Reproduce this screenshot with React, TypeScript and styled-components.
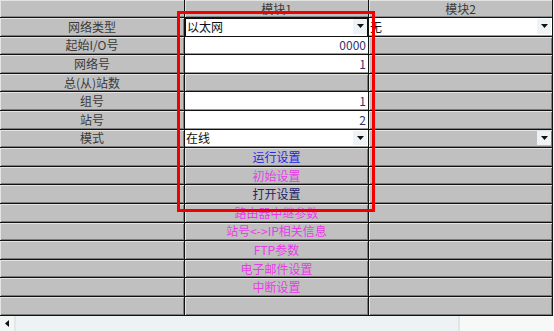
import React from "react";
import styled, { createGlobalStyle } from "styled-components";

const GlobalStyle = createGlobalStyle`
    html, body {
        margin: 0;
        padding: 0;
        background: #f4f6f6;
        font-family: "Noto Sans CJK SC", "Liberation Sans", sans-serif;
    }
`

type Cell =
    | { kind: 'gray'; arrow?: boolean }
    | { kind: 'input'; value: string }
    | { kind: 'select'; value: string; focus?: boolean }
    | { kind: 'action'; text: string; color: string }

type Row = { label: string; mod1: Cell; mod2: Cell }

const BLUE = '#2626e6'
const PINK = '#e83ce8'
const NAVY = '#22226e'

const rows: Row[] = [
    { label: '网络类型', mod1: { kind: 'select', value: '以太网', focus: true }, mod2: { kind: 'select', value: '无' } },
    { label: '起始I/O号', mod1: { kind: 'input', value: '0000' }, mod2: { kind: 'gray' } },
    { label: '网络号', mod1: { kind: 'input', value: '1' }, mod2: { kind: 'gray' } },
    { label: '总(从)站数', mod1: { kind: 'gray' }, mod2: { kind: 'gray' } },
    { label: '组号', mod1: { kind: 'input', value: '1' }, mod2: { kind: 'gray' } },
    { label: '站号', mod1: { kind: 'input', value: '2' }, mod2: { kind: 'gray' } },
    { label: '模式', mod1: { kind: 'select', value: '在线' }, mod2: { kind: 'gray', arrow: true } },
    { label: '', mod1: { kind: 'action', text: '运行设置', color: BLUE }, mod2: { kind: 'gray' } },
    { label: '', mod1: { kind: 'action', text: '初始设置', color: PINK }, mod2: { kind: 'gray' } },
    { label: '', mod1: { kind: 'action', text: '打开设置', color: NAVY }, mod2: { kind: 'gray' } },
    { label: '', mod1: { kind: 'action', text: '路由器中继参数', color: PINK }, mod2: { kind: 'gray' } },
    { label: '', mod1: { kind: 'action', text: '站号<->IP相关信息', color: PINK }, mod2: { kind: 'gray' } },
    { label: '', mod1: { kind: 'action', text: 'FTP参数', color: PINK }, mod2: { kind: 'gray' } },
    { label: '', mod1: { kind: 'action', text: '电子邮件设置', color: PINK }, mod2: { kind: 'gray' } },
    { label: '', mod1: { kind: 'action', text: '中断设置', color: PINK }, mod2: { kind: 'gray' } },
    { label: '', mod1: { kind: 'gray' }, mod2: { kind: 'gray' } },
]

function DropArrow() {
    return (
        <ArrowBox>
            <svg width="7" height="4" viewBox="0 0 7 4"><path d="M0 0h7L3.5 4z" fill="#111" /></svg>
        </ArrowBox>
    )
}

function renderCell(cell: Cell) {
    switch (cell.kind) {
        case 'input':
            return <InputCell>{cell.value}</InputCell>
        case 'select':
            return (
                <SelectCell focus={cell.focus}>
                    <span>{cell.value}</span>
                    <DropArrow />
                </SelectCell>
            )
        case 'action':
            return <ActionCell color={cell.color}>{cell.text}</ActionCell>
        default:
            return <GrayCell>{cell.arrow && <DropArrow />}</GrayCell>
    }
}

export default function App() {
    return (
        <>
            <GlobalStyle />
            <Page>
                <Sheet>
                    <HeadCell />
                    <HeadCell>模块1</HeadCell>
                    <HeadCell>模块2</HeadCell>
                    {rows.map((row, i) => (
                        <React.Fragment key={i}>
                            <LabelCell>{row.label}</LabelCell>
                            {renderCell(row.mod1)}
                            {renderCell(row.mod2)}
                        </React.Fragment>
                    ))}
                </Sheet>
                <ScrollBar>
                    <ScrollBtn>
                        <svg width="4" height="7" viewBox="0 0 4 7"><path d="M4 0v7L0 3.5z" fill="#111" /></svg>
                    </ScrollBtn>
                    <Thumb />
                    <Track />
                </ScrollBar>
                <Highlight />
            </Page>
        </>
    )
}

const Page = styled.div`
    position: relative;
    width: 554px;
    height: 331px;
    overflow: hidden;
    background: #f4f6f6;
`

const Sheet = styled.div`
    display: grid;
    grid-template-columns: 184px 183px 183px;
    grid-template-rows: 17px;
    grid-auto-rows: 17.6px;
    gap: 1px;
    width: 552px;
    background: #111;
    border-right: 1px solid #111;
    border-bottom: 1px solid #111;
    font-size: 12px;
    line-height: 1;
`

const BaseCell = styled.div`
    display: flex;
    align-items: center;
    min-width: 0;
    overflow: hidden;
    white-space: nowrap;
    box-sizing: border-box;
`

const GrayCell = styled(BaseCell)`
    justify-content: flex-end;
    background: #c0c0c0;
    box-shadow: inset 1px 1px 0 #e4e4e4, inset -1px -1px 0 #7c7c7c;
`

const HeadCell = styled(GrayCell)`
    justify-content: center;
    color: #3a3a3a;
    box-shadow: inset 1px 1px 0 #e4e4e4, inset 0 -1px 0 #8a8a8a;
`

const LabelCell = styled(GrayCell)`
    justify-content: center;
    color: #3a3a3a;
`

const ActionCell = styled(GrayCell)<{ color: string }>`
    justify-content: center;
    color: ${props => props.color};
`

const InputCell = styled(BaseCell)`
    justify-content: flex-end;
    padding-right: 2px;
    background: #fff;
    color: #33336a;
    box-shadow: inset 0 -1px 0 #9a9a9a;
`

const SelectCell = styled(BaseCell)<{ focus?: boolean }>`
    justify-content: space-between;
    padding-left: ${props => props.focus ? '2px' : '1px'};
    background: #fff;
    color: #111;
    box-shadow: ${props => props.focus
        ? 'inset 1px 1px 0 #111, inset -1px 0 0 #111'
        : 'inset 0 -1px 0 #9a9a9a'};
`

const ArrowBox = styled.div`
    display: flex;
    align-items: center;
    justify-content: center;
    align-self: stretch;
    width: 14px;
    margin: 1px 1px 2px 0;
    background: #eef3f5;
`

const ScrollBar = styled.div`
    display: flex;
    height: 15px;
    background: #f2f6f7;
    border-bottom: 1px solid #555;
`

const ScrollBtn = styled.div`
    display: flex;
    align-items: center;
    justify-content: center;
    width: 14px;
    border-right: 2px solid #e2e8ea;
`

const Thumb = styled.div`
    width: 442px;
    background: #edf3f5;
    border-right: 2px solid #dfe6e8;
`

const Track = styled.div`
    flex: 1;
    background: #f7f9f9;
`

const Highlight = styled.div`
    position: absolute;
    left: 177px;
    top: 11px;
    width: 198px;
    height: 201px;
    box-sizing: border-box;
    border: 3px solid #f20000;
    pointer-events: none;
`
